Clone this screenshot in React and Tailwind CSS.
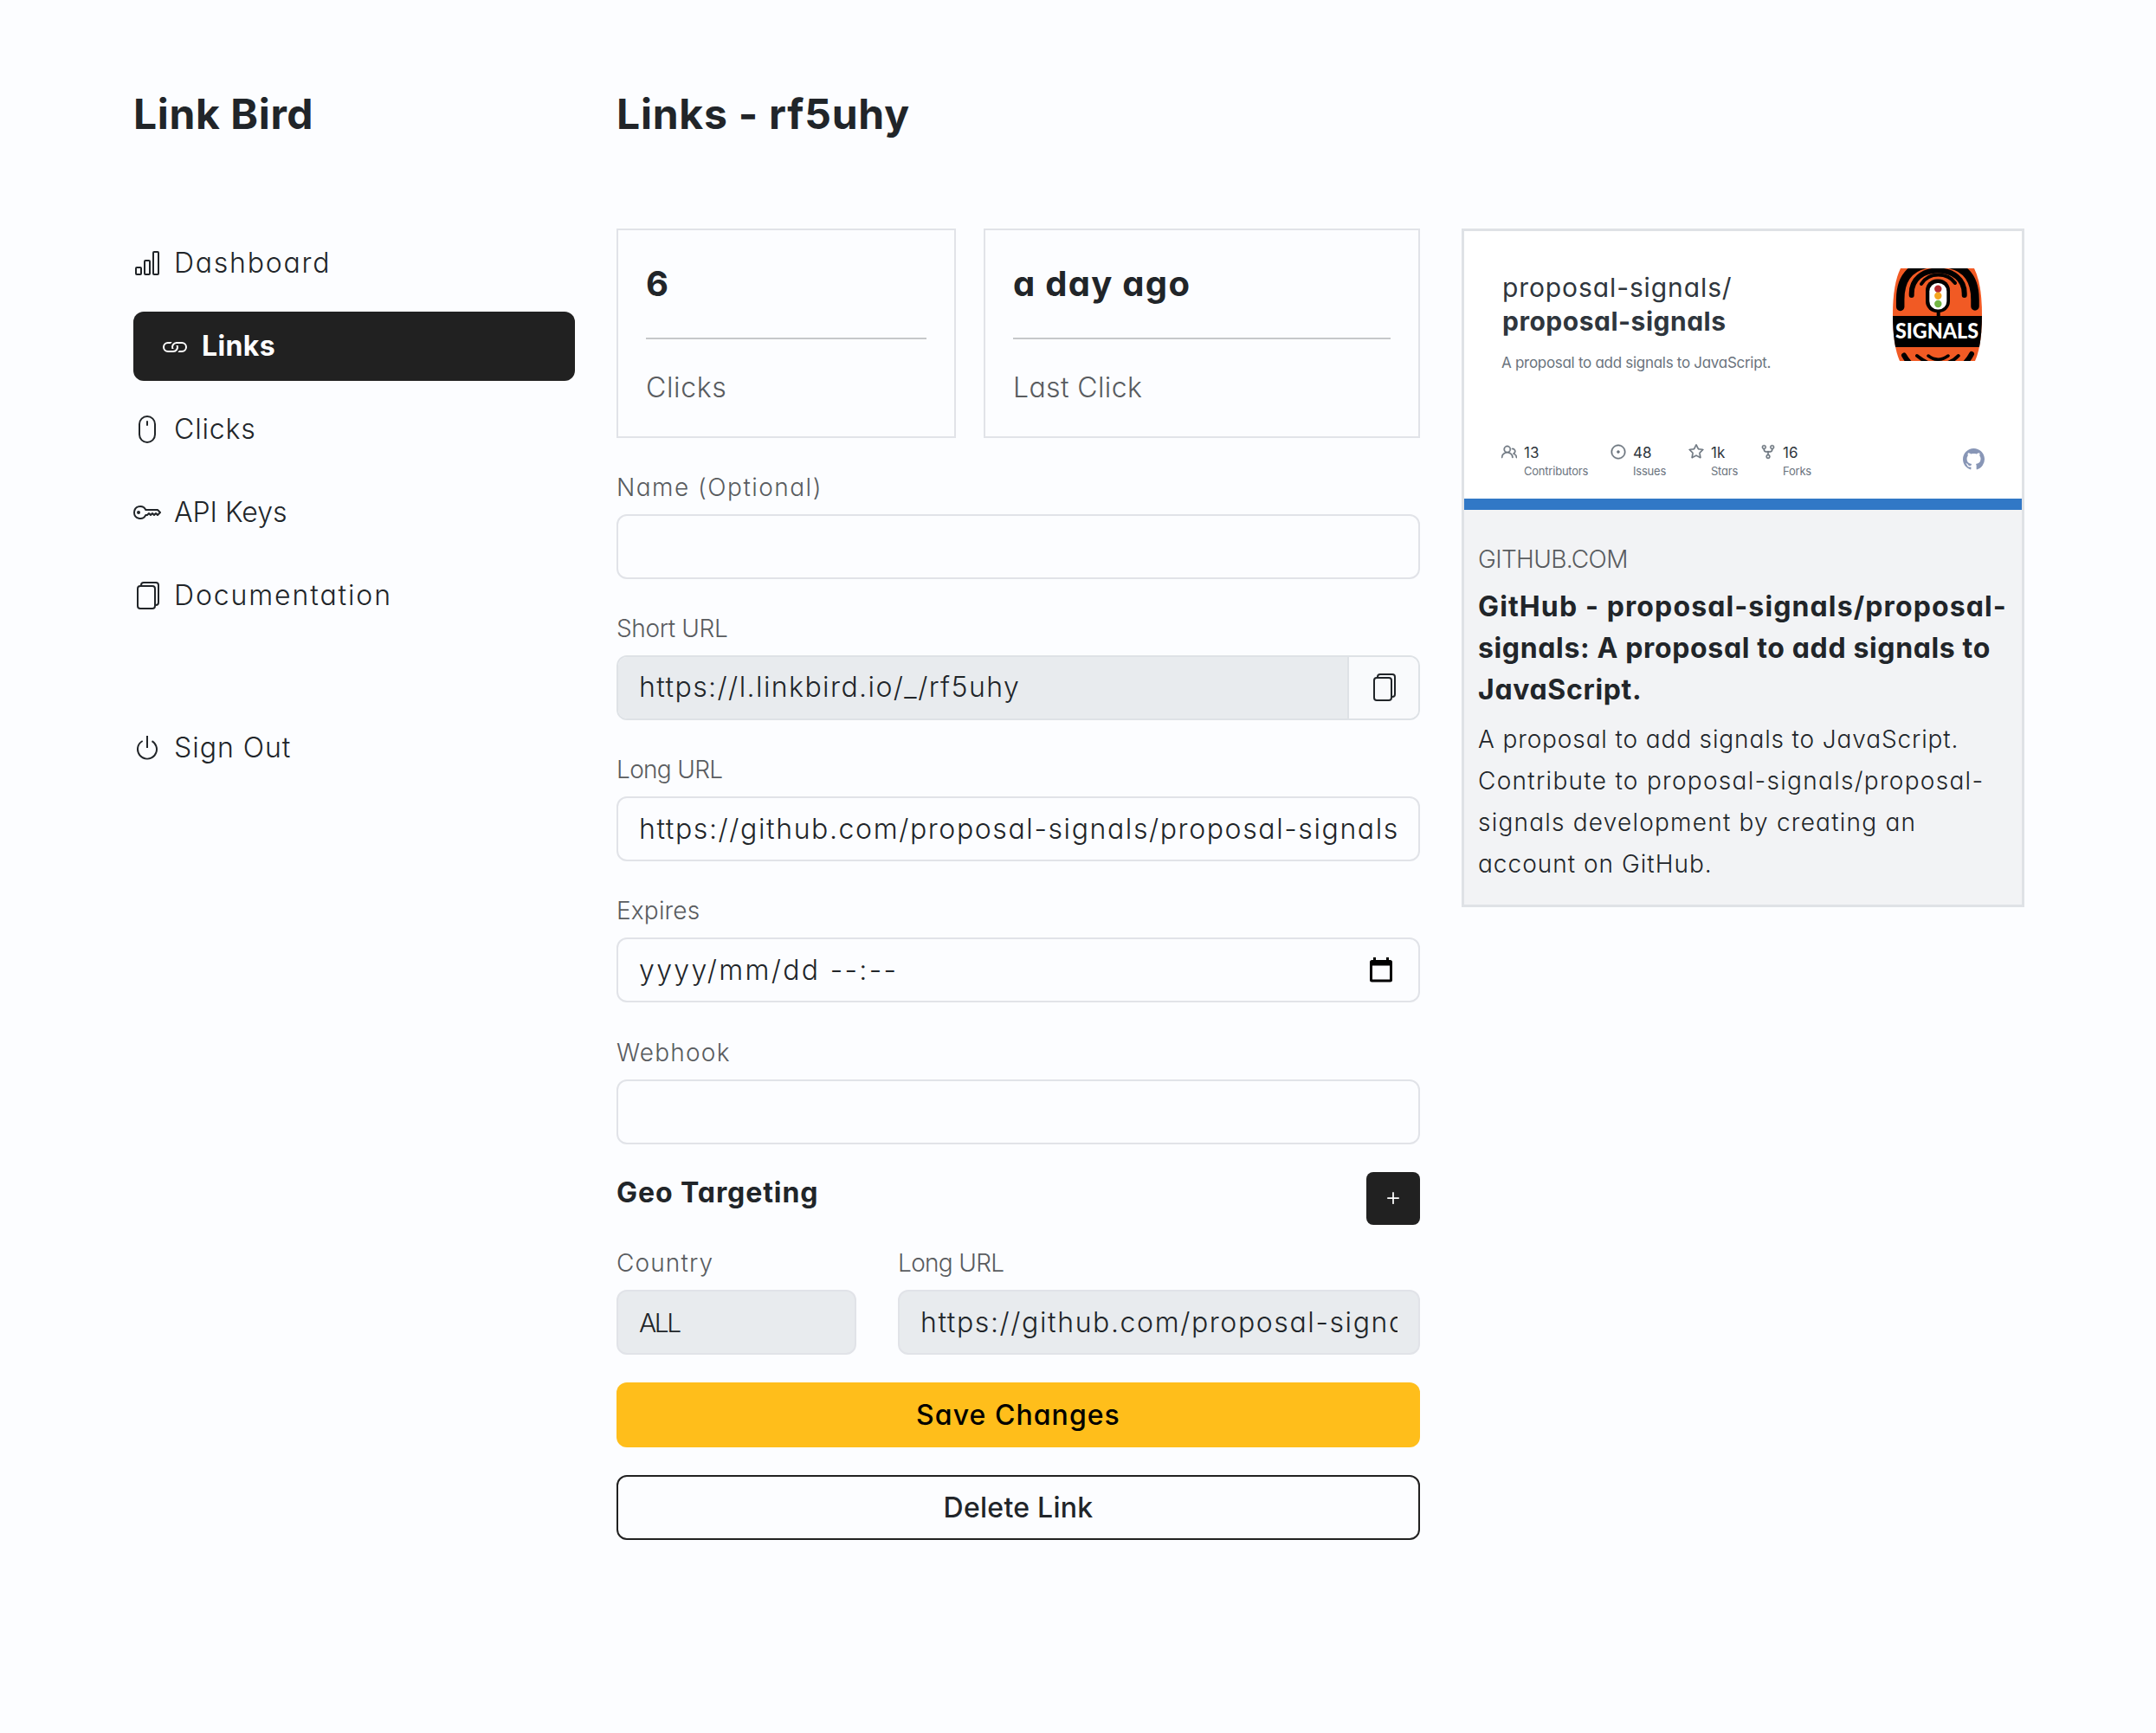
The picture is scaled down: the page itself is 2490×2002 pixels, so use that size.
import {
  BsBarChart,
  BsFiles,
  BsGithub,
  BsKey,
  BsLink,
  BsMouse,
  BsPlus,
  BsPower,
} from 'react-icons/bs';
import { GoIssueOpened, GoPeople, GoRepoForked, GoStar } from 'react-icons/go';

const LONG_URL = 'https://github.com/proposal-signals/proposal-signals';

const NAV_ITEMS = [
  { label: 'Dashboard', icon: BsBarChart, tracking: 'tracking-[0.055em]' },
  { label: 'Links', icon: BsLink, tracking: 'tracking-[0.012em]', active: true },
  { label: 'Clicks', icon: BsMouse, tracking: 'tracking-[0.026em]' },
  { label: 'API Keys', icon: BsKey, tracking: 'tracking-[-0.001em]' },
  { label: 'Documentation', icon: BsFiles, tracking: 'tracking-[0.059em]' },
];

const REPO_STATS = [
  { value: '13', label: 'Contributors', icon: GoPeople, width: 'w-[126px]' },
  { value: '48', label: 'Issues', icon: GoIssueOpened, width: 'w-[90px]' },
  { value: '1k', label: 'Stars', icon: GoStar, width: 'w-[83px]' },
  { value: '16', label: 'Forks', icon: GoRepoForked, width: 'w-[70px]' },
];

const NavItem = ({ label, icon: Icon, tracking, active }) => (
  <a
    href="#"
    className={
      active
        ? 'flex h-20 items-center gap-[15px] rounded-xl bg-[#212121] px-8 font-bold text-white'
        : 'flex h-20 items-center gap-[15px] font-[350]'
    }
  >
    <Icon className="size-8 shrink-0" />
    <span className={`text-[32px] leading-12 ${tracking}`}>{label}</span>
  </a>
);

const StatCard = ({ value, label, className, valueTracking, labelTracking }) => (
  <div className={`h-[242px] border-2 border-[#e1e3e8] p-8 ${className}`}>
    <div className={`text-[40px] leading-[59px] font-bold ${valueTracking}`}>{value}</div>
    <hr className="mt-[33px] mb-8 border-t-2 border-[#c6c8ca]" />
    <div className={`text-[32px] leading-12 font-[350] text-[#595c5f] ${labelTracking}`}>{label}</div>
  </div>
);

const Field = ({ label, tracking, className = '', children }) => (
  <div className={className}>
    <label className={`mb-2.5 block h-[42px] text-[28px] leading-[42px] font-[350] text-[#595c5f] ${tracking}`}>
      {label}
    </label>
    {children}
  </div>
);

const inputClass =
  'block h-[75px] w-full rounded-xl border-2 border-[#e1e3e8] bg-transparent px-6 text-[32px] font-[350] outline-none';

const CalendarIcon = () => (
  <svg viewBox="0 0 26 29" className="h-[29px] w-[26px]">
    <path
      fillRule="evenodd"
      d="M4 0h3v3h12V0h3v3h1.500a2.500 2.500 0 0 1 2.500 2.500v20.500a2.500 2.500 0 0 1-2.500 2.500h-21a2.500 2.500 0 0 1-2.500-2.500V5.500A2.500 2.500 0 0 1 2.500 3H4zM3 9.500V25.500h20V9.500z"
    />
  </svg>
);

const SignalsLogo = () => (
  <svg viewBox="0 0 103 107" className="h-[107px] w-[103px] overflow-visible">
    <defs>
      <clipPath id="signals-shape">
        <path d="M9 0H94Q103 18 103 53.500Q103 89 95 107H8Q0 89 0 53.500Q0 18 9 0Z" />
      </clipPath>
    </defs>
    <g clipPath="url(#signals-shape)">
      <rect width="103" height="107" fill="#f15a24" />
      <g fill="none" stroke="#000" strokeLinecap="round">
        <path strokeWidth="9.500" d="M8.700 44.500V36C8.700 8 24 -6 52 -6S95 8 95 36V44" />
        <path strokeWidth="6" d="M21.700 31V29C21.700 13 34 2.500 52 2.500S82.700 13 82.700 29V31" />
        <path strokeWidth="4" d="M33 18C38 10 44 7.500 52.500 7.500S67 10 72 17" />
        <path strokeWidth="6" d="M13 100.500C15 104 18 108 21 111M91 99C89 103 85 108 82 111" />
        <path strokeWidth="4" d="M28 101C32 104 37 108 43 110M75.700 101C72 105 67 108 61 110" />
        <path strokeWidth="3.500" d="M41 101Q52 109.500 64 101" />
      </g>
      <rect x="38" y="12.500" width="28" height="38.500" rx="13" />
      <rect x="50.700" y="49" width="4" height="8" />
      <rect x="42.300" y="17" width="20" height="30.500" rx="9.500" fill="#fff" />
      <circle cx="52.300" cy="23.700" r="4.200" fill="#b5282d" />
      <circle cx="52.300" cy="31.800" r="4.200" fill="#f4a51f" />
      <circle cx="52.300" cy="41" r="4.200" fill="#72b643" />
      <rect y="55" width="103" height="36" />
    </g>
    <text
      x="3"
      y="81.300"
      textLength="96"
      lengthAdjust="spacingAndGlyphs"
      className="fill-white font-[Lato,sans-serif] text-[25px] font-black"
    >
      SIGNALS
    </text>
  </svg>
);

const RepoImage = () => (
  <div className="flex h-[322px] flex-col justify-between border-b-[13px] border-[#3178c6] bg-white pl-[43px] text-[#2f363d]">
    <div className="flex justify-between pr-[46px]">
      <div className="pt-[46px]">
        <div className="pl-px text-[30px] leading-[39px] tracking-[0.03em]">proposal-signals/</div>
        <div className="pl-px text-[30px] leading-[39px] font-bold tracking-[0.017em]">proposal-signals</div>
        <div className="mt-4 text-[17px] leading-6 tracking-[-0.017em] text-[#6a737d]">
          A proposal to add signals to JavaScript.
        </div>
      </div>
      <div className="pt-[43px]">
        <SignalsLogo />
      </div>
    </div>
    <div className="flex items-start justify-between pr-[43px] pb-[22px]">
      <div className="flex">
        {REPO_STATS.map(({ value, label, icon: Icon, width }) => (
          <div key={label} className={`flex gap-2 ${width}`}>
            <Icon className="mt-[1px] size-[18px] shrink-0 stroke-[0.7] text-[#6a737d]" />
            <div>
              <div className="text-[17px] leading-[22px]">{value}</div>
              <div className="text-[13px] leading-5 tracking-[-0.017em] text-[#6a737d]">{label}</div>
            </div>
          </div>
        ))}
      </div>
      <BsGithub className="mt-[6px] size-[25px] text-[#8896b6]" />
    </div>
  </div>
);

const LinkPreview = () => (
  <aside className="h-[784px] w-[650px] border-3 border-[#dfe2e6] bg-[#f2f3f5]">
    <RepoImage />
    <div className="px-4 pt-[36px]">
      <div className="text-[28px] leading-[42px] font-[350] tracking-[-0.022em] text-[#595c5f]">GITHUB.COM</div>
      <h2 className="mt-[10px] text-[32px] leading-12 font-bold whitespace-nowrap">
        <span className="block tracking-[0.035em]">GitHub - proposal-signals/proposal-</span>
        <span className="block tracking-[0.020em]">signals: A proposal to add signals to</span>
        <span className="block tracking-[0.021em]">JavaScript.</span>
      </h2>
      <p className="mt-[9px] text-[28px] leading-12 font-[350] whitespace-nowrap">
        <span className="block tracking-[0.031em]">A proposal to add signals to JavaScript.</span>
        <span className="block tracking-[0.046em]">Contribute to proposal-signals/proposal-</span>
        <span className="block tracking-[0.0435em]">signals development by creating an</span>
        <span className="block tracking-[0.036em]">account on GitHub.</span>
      </p>
    </div>
  </aside>
);

const LinkForm = () => (
  <form className="w-[928px]">
    <div className="flex gap-8">
      <StatCard value="6" label="Clicks" className="w-[392px]" labelTracking="tracking-[0.02em]" />
      <StatCard
        value="a day ago"
        label="Last Click"
        className="w-[504px]"
        valueTracking="tracking-[0.032em]"
        labelTracking="tracking-[0.012em]"
      />
    </div>

    <div className="mt-[35.5px] flex flex-col gap-[36.25px]">
      <Field label="Name (Optional)" tracking="tracking-[0.053em]">
        <input type="text" className={inputClass} />
      </Field>
      <Field label="Short URL" tracking="tracking-[-0.013em]">
        <div className="flex h-[75px] overflow-hidden rounded-xl border-2 border-[#dee2e6]">
          <input
            type="text"
            readOnly
            defaultValue="https://l.linkbird.io/_/rf5uhy"
            className="min-w-0 flex-1 bg-[#e8ebee] px-6 text-[32px] font-[350] tracking-[0.0445em] outline-none"
          />
          <button type="button" className="flex w-[82px] items-center justify-center border-l-2 border-[#dee2e6] bg-[#f9fafc]">
            <BsFiles className="size-8" />
          </button>
        </div>
      </Field>
      <Field label="Long URL" tracking="tracking-[-0.024em]">
        <input type="text" defaultValue={LONG_URL} className={`${inputClass} tracking-[0.05em]`} />
      </Field>
      <Field label="Expires" tracking="tracking-[0.006em]">
        <div className={`${inputClass} flex! items-center justify-between pr-[30px]!`}>
          <span className="tracking-[0.073em]">yyyy/mm/dd --:--</span>
          <CalendarIcon />
        </div>
      </Field>
      <Field label="Webhook" tracking="tracking-[0.043em]">
        <input type="text" className={inputClass} />
      </Field>
    </div>

    <div className="mt-8 flex items-start justify-between">
      <h2 className="text-[32px] leading-12 font-bold tracking-[0.029em]">Geo Targeting</h2>
      <button type="button" className="flex h-[61px] w-[62px] items-center justify-center rounded-lg bg-[#212121] text-white">
        <BsPlus className="size-7" />
      </button>
    </div>

    <div className="mt-[23.5px] flex gap-12">
      <Field label="Country" tracking="tracking-[0.04em]" className="w-[277px]">
        <input
          type="text"
          disabled
          defaultValue="ALL"
          className={`${inputClass} bg-[#e8ebee]! text-[30px]! tracking-[-0.08em]`}
        />
      </Field>
      <Field label="Long URL" tracking="tracking-[-0.024em]" className="flex-1">
        <input
          type="text"
          disabled
          defaultValue={LONG_URL}
          className={`${inputClass} bg-[#e8ebee]! tracking-[0.05em]`}
        />
      </Field>
    </div>

    <button
      type="submit"
      className="mt-8 block h-[75px] w-full rounded-xl bg-[#ffbe1b] text-[32px] font-medium tracking-[0.033em] text-black"
    >
      Save Changes
    </button>
    <button
      type="button"
      className="mt-8 block h-[75px] w-full rounded-xl border-2 border-[#212121] text-[32px] font-medium tracking-[0.008em]"
    >
      Delete Link
    </button>
  </form>
);

const App = () => (
  <div className="flex min-h-screen gap-12 bg-[#fcfdff] pt-24 pl-[154px] font-[Inter,sans-serif] text-[#212529] [font-feature-settings:'cv11']">
    <nav className="w-[510px]">
      <h1 className="mb-24 text-[48px] leading-[72px] font-bold tracking-[0.013em]">Link Bird</h1>
      <div className="flex flex-col gap-4">
        {NAV_ITEMS.map((item) => (
          <NavItem key={item.label} {...item} />
        ))}
      </div>
      <div className="mt-24">
        <NavItem label="Sign Out" icon={BsPower} tracking="tracking-[0.031em]" />
      </div>
    </nav>

    <main>
      <h1 className="mb-24 text-[48px] leading-[72px] font-bold tracking-[0.016em]">Links - rf5uhy</h1>
      <div className="flex items-start gap-12">
        <LinkForm />
        <LinkPreview />
      </div>
    </main>
  </div>
);

export default App;
